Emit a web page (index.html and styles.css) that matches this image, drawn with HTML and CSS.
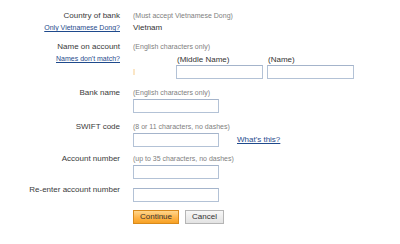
FILE: index.html
```html
<!DOCTYPE html>
<html lang="en">
<head>
  <meta charset="UTF-8" />
  <title>Bank account</title>
  <link rel="stylesheet" href="styles.css">
</head>
<body>

  <form class="bank-form">
    <div class="row row-country">
      <div class="label">Country of bank<a href="#">Only Vietnamese Dong?</a></div>
      <div class="field">
        <div class="hint">(Must accept Vietnamese Dong)</div>
        <div class="value">Vietnam</div>
      </div>
    </div>

    <div class="row row-name">
      <div class="label">Name on account<a href="#">Names don't match?</a></div>
      <div class="field">
        <div class="hint">(English characters only)</div>
        <div class="names">
          <div class="name-first"><span class="mark"></span></div>
          <div class="name-col">
            <label for="middle">(Middle Name)</label>
            <input type="text" id="middle" class="input name-input" />
          </div>
          <div class="name-col">
            <label for="given">(Name)</label>
            <input type="text" id="given" class="input name-input" />
          </div>
        </div>
      </div>
    </div>

    <div class="row row-bank">
      <div class="label">Bank name</div>
      <div class="field">
        <div class="hint">(English characters only)</div>
        <input type="text" class="input" />
      </div>
    </div>

    <div class="row row-swift">
      <div class="label">SWIFT code</div>
      <div class="field">
        <div class="hint">(8 or 11 characters, no dashes)</div>
        <div class="inline">
          <input type="text" class="input" />
          <a href="#" class="help">What's this?</a>
        </div>
      </div>
    </div>

    <div class="row row-account">
      <div class="label">Account number</div>
      <div class="field">
        <div class="hint">(up to 35 characters, no dashes)</div>
        <input type="text" class="input" />
      </div>
    </div>

    <div class="row row-reenter">
      <div class="label">Re-enter account number</div>
      <div class="field">
        <input type="text" class="input" />
      </div>
    </div>

    <div class="row row-buttons">
      <div class="label"></div>
      <div class="field buttons">
        <button type="button" class="btn btn-primary">Continue</button>
        <button type="button" class="btn btn-secondary">Cancel</button>
      </div>
    </div>
  </form>

</body>
</html>
```

FILE: styles.css
```css
body {
  margin: 0;
  background: #fff;
  font-family: "Liberation Sans", Arial, sans-serif;
  color: #333;
}
.bank-form {
  padding-top: 10px;
}
.row {
  display: grid;
  grid-template-columns: 120px 1fr;
  column-gap: 13px;
  font-size: 8px;
  line-height: 12px;
}
.label {
  text-align: right;
  color: #3a3a3a;
}
.label a {
  display: block;
  font-size: 7px;
  line-height: 10px;
  margin-top: 1px;
  color: #1f4a8c;
}
.hint {
  font-size: 7px;
  line-height: 12px;
  color: #808080;
}
.value {
  line-height: 11px;
}
.input {
  display: block;
  box-sizing: border-box;
  width: 86px;
  height: 14px;
  margin: 0;
  padding: 0 2px;
  border: 1px solid #b3c2d6;
  border-top-color: #a4b4cb;
  background: #fff;
  font: inherit;
}
.row-name {
  margin-top: 8px;
}
.names {
  display: flex;
  gap: 4px;
  margin-top: 2px;
}
.name-first {
  width: 39px;
  display: flex;
  align-items: flex-end;
}
.mark {
  width: 2px;
  height: 6px;
  margin-bottom: 4px;
  background: #fbe6c6;
}
.name-col label {
  display: block;
  padding-left: 1px;
  line-height: 10px;
}
.name-input {
  width: 87px;
}
.row-bank {
  margin-top: 8px;
}
.row-swift {
  margin-top: 8px;
}
.row-account {
  margin-top: 6px;
}
.inline {
  display: flex;
  align-items: center;
  gap: 18px;
}
.help {
  color: #1f4a8c;
}
.row-reenter {
  margin-top: 5px;
}
.row-reenter .input {
  margin-top: 4px;
}
.row-buttons {
  margin-top: 8px;
}
.buttons {
  display: flex;
  gap: 6px;
}
.btn {
  height: 14px;
  padding: 0 5px;
  font: inherit;
  font-size: 8px;
  line-height: 12px;
  color: #333;
  cursor: pointer;
}
.btn-primary {
  width: 46px;
  border: 1px solid #d88a1c;
  background: linear-gradient(to bottom, #ffd68c, #ffb54a 55%, #f7a124);
}
.btn-secondary {
  width: 39px;
  border: 1px solid #b5b5b5;
  background: linear-gradient(to bottom, #f7f7f7, #e3e3e3);
}
```
